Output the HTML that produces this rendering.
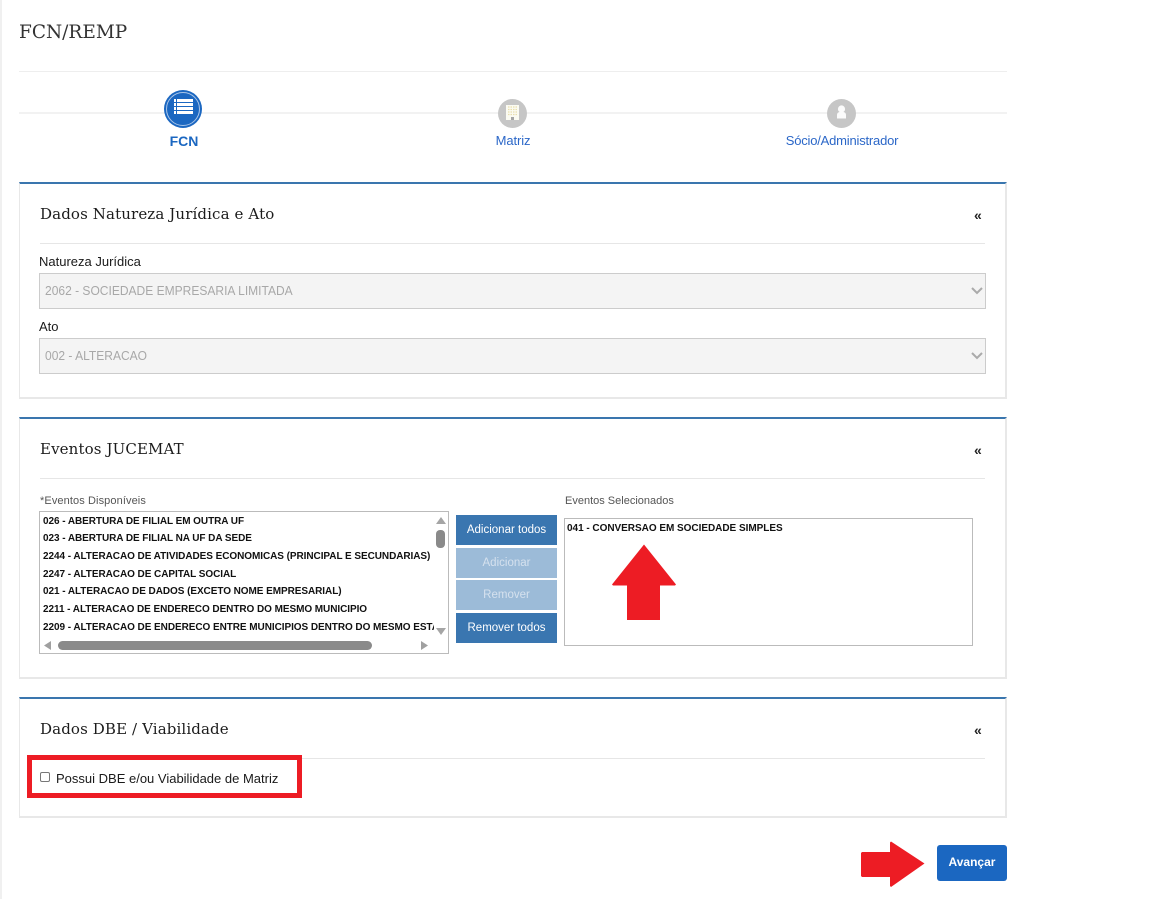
<!DOCTYPE html>
<html><head><meta charset="utf-8"><style>
html,body{margin:0;padding:0;background:#fff;width:1152px;height:899px;overflow:hidden}
body{position:relative;font-family:"Liberation Sans",sans-serif}
.a{position:absolute;white-space:nowrap}
.panel{position:absolute;left:19px;width:988px;box-sizing:border-box;background:#fff;border-top:2px solid #3a76ae;border-left:1px solid #e8e8e8;border-right:2px solid #e8e8e8;border-bottom:2px solid #e8e8e8}
.h{position:absolute;left:40px;font:15px "DejaVu Serif","Liberation Serif",serif;letter-spacing:.12px;color:#1c1c1c;white-space:nowrap}
.hr{position:absolute;left:40px;width:945px;height:1px;background:#e6e6e6}
.dbl{position:absolute;left:974px;font:bold 14px "Liberation Sans",sans-serif;color:#222;line-height:14px}
.lab{position:absolute;font:13px "Liberation Sans",sans-serif;color:#1a1a1a;white-space:nowrap}
.sel{position:absolute;left:39px;width:947px;height:36px;box-sizing:border-box;background:#f4f4f4;border:1px solid #ccc;font:13px/34px "Liberation Sans",sans-serif;color:#a8a8a8;padding-left:5px}
.sel span{display:inline-block;transform:scaleX(.925);transform-origin:left center;white-space:nowrap}
.sel svg{position:absolute;right:0;top:12px}
.item{position:absolute;left:43px;font:bold 10px "Liberation Sans",sans-serif;letter-spacing:-.06px;color:#111;white-space:nowrap;max-width:391px;overflow:hidden}
.btn{position:absolute;left:456px;width:101px;height:30px;background:#3a76b0;color:#fff;font:11.500px/31px "Liberation Sans",sans-serif;text-align:center}
.off{background:#9cbbd8;color:#d5e1ee}
</style></head><body>
<div class="a" style="left:0;top:0;width:2px;height:899px;background:#f0f0f0"></div>
<div class="a" style="left:19px;top:22px;font:18.500px 'DejaVu Serif','Liberation Serif',serif;color:#333">FCN/REMP</div>
<div class="a" style="left:19px;top:71px;width:988px;height:1px;background:#eee"></div>
<div class="a" style="left:19px;top:112px;width:988px;height:2px;background:#f2f2f2"></div>

<svg class="a" style="left:164px;top:90px" width="38" height="38" viewBox="0 0 38 38"><circle cx="19" cy="19" r="19" fill="#1b67c1"/><circle cx="19" cy="19" r="16.500" fill="none" stroke="#a9c5e8" stroke-width="1"/><path d="M10 9h2v3h-2zM13 9h16v3H13zM10 13h2v3h-2zM13 13h16v3H13zM10 17h2v3h-2zM13 17h16v3H13zM10 21h2v3h-2zM13 21h16v3H13z" fill="#fff"/></svg>
<div class="a" style="left:164px;top:133px;width:40px;text-align:center;font:bold 14px 'Liberation Sans',sans-serif;color:#1b67c1">FCN</div>

<svg class="a" style="left:498px;top:99px" width="29" height="29" viewBox="0 0 29 29"><circle cx="14.500" cy="14.500" r="14.500" fill="#c6c6c6"/><rect x="8" y="6" width="13" height="15" fill="#fbfbf2"/><path d="M10 8h9M10 10.500h9M10 13h9M10 15.500h9" stroke="#eadfae" stroke-width="1.200" stroke-dasharray="1.500 1"/><rect x="13" y="18" width="3" height="3" fill="#a5a5a5"/></svg>
<div class="a" style="left:483px;top:133px;width:60px;text-align:center;font:13px 'Liberation Sans',sans-serif;color:#2b67c8;letter-spacing:-.1px">Matriz</div>

<svg class="a" style="left:827px;top:99px" width="29" height="29" viewBox="0 0 29 29"><circle cx="14.500" cy="14.500" r="14.500" fill="#c6c6c6"/><circle cx="14.500" cy="10" r="3.600" fill="#fbfbfb"/><path d="M10 19.500v-3.500c0-2 1.500-3 3-3h3c1.500 0 3 1 3 3v3.500z" fill="#fbfbfb"/></svg>
<div class="a" style="left:772px;top:133px;width:140px;text-align:center;font:13px 'Liberation Sans',sans-serif;color:#2b67c8;letter-spacing:-.2px">Sócio/Administrador</div>

<div class="panel" style="top:182px;height:217px"></div>
<div class="h" style="top:205px">Dados Natureza Jurídica e Ato</div>
<div class="dbl" style="top:208px">«</div>
<div class="hr" style="top:243px"></div>
<div class="lab" style="left:39px;top:254px">Natureza Jurídica</div>
<div class="sel" style="top:273px"><span>2062 - SOCIEDADE EMPRESARIA LIMITADA</span><svg width="16" height="10" viewBox="0 0 16 10"><path d="M3 2l5 5 5-5" fill="none" stroke="#aaa" stroke-width="2"/></svg></div>
<div class="lab" style="left:39px;top:319px">Ato</div>
<div class="sel" style="top:338px"><span>002 - ALTERACAO</span><svg width="16" height="10" viewBox="0 0 16 10"><path d="M3 2l5 5 5-5" fill="none" stroke="#aaa" stroke-width="2"/></svg></div>

<div class="panel" style="top:417px;height:262px"></div>
<div class="h" style="top:440px">Eventos JUCEMAT</div>
<div class="dbl" style="top:443px">«</div>
<div class="hr" style="top:478px"></div>
<div class="lab" style="left:40px;top:495px;font-size:11px;color:#555;letter-spacing:.1px">*Eventos Disponíveis</div>
<div class="a" style="left:39px;top:511px;width:410px;height:143px;box-sizing:border-box;border:1px solid #bbb"></div>
<div class="item" style="top:516px">026 - ABERTURA DE FILIAL EM OUTRA UF</div>
<div class="item" style="top:533px">023 - ABERTURA DE FILIAL NA UF DA SEDE</div>
<div class="item" style="top:551px">2244 - ALTERACAO DE ATIVIDADES ECONOMICAS (PRINCIPAL E SECUNDARIAS)</div>
<div class="item" style="top:569px">2247 - ALTERACAO DE CAPITAL SOCIAL</div>
<div class="item" style="top:586px">021 - ALTERACAO DE DADOS (EXCETO NOME EMPRESARIAL)</div>
<div class="item" style="top:604px">2211 - ALTERACAO DE ENDERECO DENTRO DO MESMO MUNICIPIO</div>
<div class="item" style="top:622px">2209 - ALTERACAO DE ENDERECO ENTRE MUNICIPIOS DENTRO DO MESMO ESTADO</div>
<svg class="a" style="left:40px;top:512px" width="408" height="141" viewBox="0 0 408 141"><path d="M396 12l5-7 5 7zM396 116l5 7 5-7z" fill="#a5a5a5"/><rect x="396" y="18" width="9" height="18" rx="4" fill="#8a8a8a"/><rect x="18" y="129" width="314" height="9" rx="4.500" fill="#8a8a8a"/><path d="M11 129l-7 4.500 7 4.500zM381 129l7 4.500-7 4.500z" fill="#a0a0a0"/></svg>
<div class="btn" style="top:515px">Adicionar todos</div>
<div class="btn off" style="top:548px">Adicionar</div>
<div class="btn off" style="top:580px">Remover</div>
<div class="btn" style="top:613px">Remover todos</div>
<div class="lab" style="left:565px;top:495px;font-size:11px;color:#555">Eventos Selecionados</div>
<div class="a" style="left:564px;top:518px;width:409px;height:128px;box-sizing:border-box;border:1px solid #bbb"></div>
<div class="a" style="left:567px;top:523px;font:bold 10px 'Liberation Sans',sans-serif;color:#111;letter-spacing:-.03px">041 - CONVERSAO EM SOCIEDADE SIMPLES</div>
<svg class="a" style="left:611px;top:544px" width="66" height="77" viewBox="0 0 66 77"><path d="M33 .5L65 40.500 64 41.500H49V76H16V41.500H2L1 40.500z" fill="#ed1c24"/></svg>

<div class="panel" style="top:697px;height:121px"></div>
<div class="h" style="top:720px">Dados DBE / Viabilidade</div>
<div class="dbl" style="top:723px">«</div>
<div class="hr" style="top:758px"></div>
<div class="a" style="left:27px;top:755px;width:275px;height:43px;box-sizing:border-box;border:5px solid #ed1c24;background:#fff"></div>
<div class="a" style="left:40px;top:772px;width:10px;height:10px;box-sizing:border-box;border:1px solid #777;border-radius:2px;background:#fff"></div>
<div class="a" style="left:56px;top:771px;font:13px 'Liberation Sans',sans-serif;color:#1a1a1a">Possui DBE e/ou Viabilidade de Matriz</div>

<svg class="a" style="left:860px;top:841px" width="66" height="47" viewBox="0 0 66 47"><path d="M2 11H30V1.500L31 .5 64.500 22.500 31 46 30 45V36H2L1 35V12z" fill="#ed1c24"/></svg>
<div class="a" style="left:937px;top:845px;width:70px;height:36px;background:#1b67c1;border-radius:3px;color:#fff;font:bold 12px/34px 'Liberation Sans',sans-serif;text-align:center">Avançar</div>
</body></html>
